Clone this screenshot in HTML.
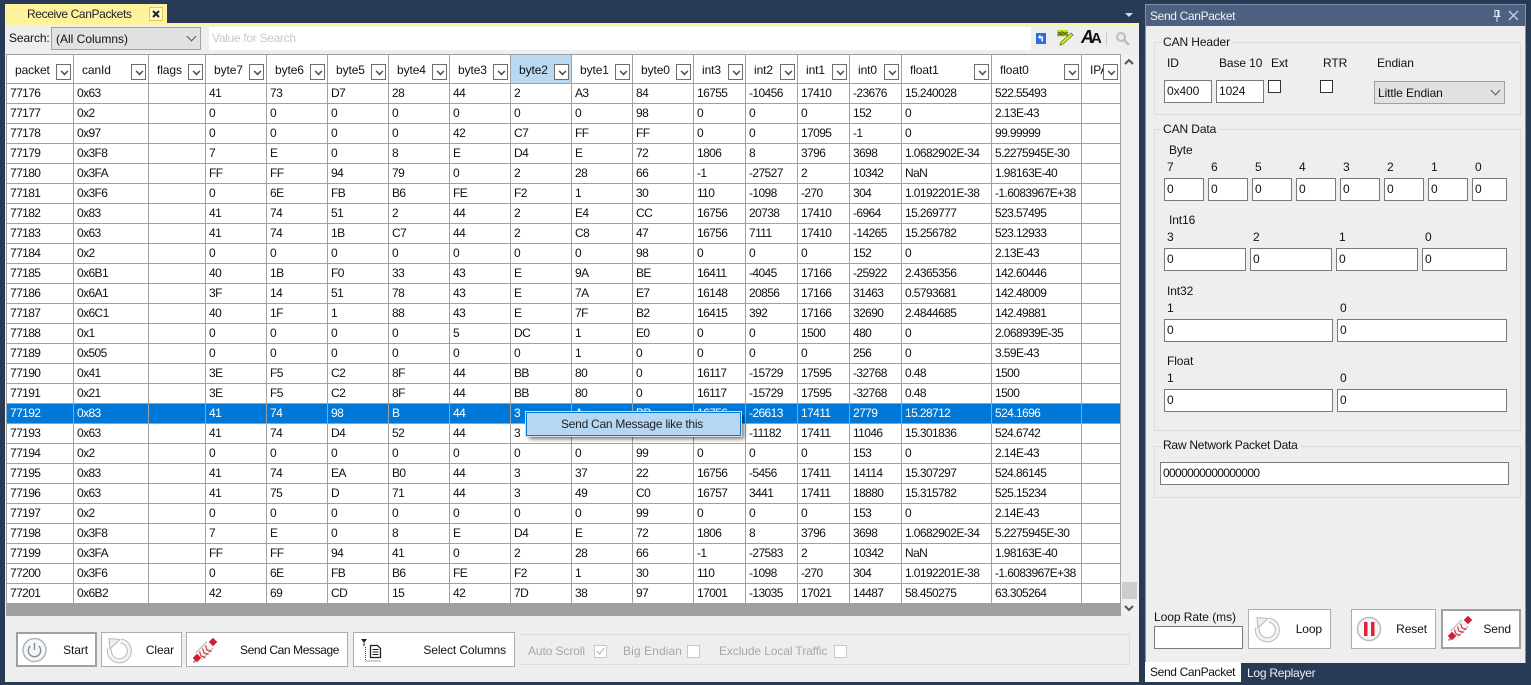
<!DOCTYPE html>
<html><head><meta charset="utf-8"><style>
*{box-sizing:border-box}
html,body{margin:0;padding:0}
body{width:1531px;height:685px;position:relative;overflow:hidden;background:#293a56;font:12px/16px "Liberation Sans",sans-serif;color:#111;letter-spacing:-.1px}
.a{position:absolute;white-space:nowrap}
.l{position:absolute;white-space:nowrap;line-height:16px;margin-top:-8px}
.i{position:absolute;background:#fff;border:1px solid #7a7a7a;height:23px;line-height:20px;padding-left:2px;white-space:nowrap}
.c{position:absolute;background:#fff;border:1px solid #333;width:13px;height:13px}
.g{position:absolute;border:1px solid #dcdcdc}
.leg{position:absolute;background:#eee;padding:0 2px 0 2px;line-height:14px;margin-top:-7px;white-space:nowrap}
.b{position:absolute;background:#fff;border:1px solid #adadad;height:35px}
.b2{border:2px solid #a0a0a0}
.t{position:absolute;white-space:nowrap;line-height:16px;top:50%;margin-top:-8px}
table{position:absolute;left:7px;top:55px;border-collapse:separate;border-spacing:0;table-layout:fixed;width:1114px;letter-spacing:-.6px;color:#111}
td,th{border-right:1px solid #a0a0a0;border-bottom:1px solid #a0a0a0;padding:0 0 0 3px;height:20px;line-height:19px;overflow:hidden;white-space:nowrap;text-align:left;font-weight:normal}
th{height:29px;padding:2px 0 0 8px;position:relative;letter-spacing:-.1px;overflow:visible;line-height:26px;vertical-align:top}
th i{position:absolute;right:2px;top:9px;width:15px;height:16px;background:#fff;border:1px solid #6d6d6d;z-index:2}
th i:after{content:"";position:absolute;left:4px;top:3px;width:5px;height:5px;border-right:2px solid #555;border-bottom:2px solid #555;transform:rotate(45deg) scale(.8)}
th.h{background:#b9d9f2}
tr.s td{background:#0078d7;color:#fff}
.dis{color:#a6a6a6}
.chev{position:absolute;width:7px;height:7px;border-right:1px solid #555;border-bottom:1px solid #555;transform:rotate(45deg)}
</style></head><body>

<!-- left doc -->
<div class="a" style="left:5px;top:4px;width:162px;height:20px;background:#fff29d"></div>
<div class="a" style="left:27px;top:6px;line-height:16px;color:#222;letter-spacing:-.38px">Receive CanPackets</div>
<div class="a" style="left:149px;top:7px;width:14px;height:14px;background:#fff8c8;border:1px solid #e5c365"></div>
<svg class="a" style="left:149px;top:7px" width="14" height="14"><path d="M4 4l6 6M10 4l-6 6" stroke="#222" stroke-width="2"/></svg>
<svg class="a" style="left:1124px;top:12px" width="10" height="6"><path d="M1 1h8L5 5z" fill="#d5dbe6"/></svg>
<div class="a" style="left:5px;top:23px;width:1134px;height:2px;background:#fff29d"></div>
<div class="a" style="left:5px;top:25px;width:1134px;height:657px;background:#eee"></div>

<!-- search -->
<div class="l" style="left:9px;top:38px">Search:</div>
<div class="a" style="left:51px;top:27px;width:150px;height:23px;background:#e1e1e1;border:1px solid #a0a0a0;padding-left:4px;line-height:23px;letter-spacing:0">(All Columns)</div>
<div class="chev" style="left:188px;top:33px"></div>
<div class="a" style="left:209px;top:27px;width:822px;height:23px;background:#fff;color:#c8c8c8;padding-left:3px;line-height:23px;letter-spacing:-.3px">Value for Search</div>
<svg class="a" style="left:1036px;top:33px" width="10" height="11"><rect width="10" height="11" fill="#2d6fd8"/><path d="M2 4l2.500-2.500V3.500h2.500V8.500h-1.500V5H4.500v1.500z" fill="#fff"/></svg>
<svg class="a" style="left:1056px;top:29px" width="19" height="17"><rect x="1" y="1" width="11" height="6.500" fill="#c4e000"/><text x="1.500" y="6.500" font-family="Liberation Sans" font-size="6.500" font-weight="bold" fill="#333">abc</text><path d="M17 6L7 15l-3 1 1-3 10-9z" fill="#d8e840" stroke="#5a7a10" stroke-width=".8"/></svg>
<div class="a" style="left:1081px;top:27px;font:italic bold 18px/21px 'Liberation Sans',sans-serif;color:#111;letter-spacing:-3px">A<span style="font:bold 15px 'Liberation Sans',sans-serif;font-style:normal">A</span></div>
<div class="a" style="left:1106px;top:32px;width:1px;height:14px;background:#ccc"></div>
<svg class="a" style="left:1115px;top:31px" width="15" height="15"><circle cx="6" cy="6" r="4" fill="none" stroke="#bcbcbc" stroke-width="2"/><path d="M9 9l5 5" stroke="#bcbcbc" stroke-width="2.500"/></svg>

<!-- grid -->
<div class="a" style="left:6px;top:54px;width:1115px;height:550px;background:#fff;border-top:1px solid #a0a0a0;border-left:1px solid #a0a0a0"></div>
<table>
<colgroup><col style="width:67px"><col style="width:75px"><col style="width:57px"><col style="width:61px"><col style="width:61px"><col style="width:61px"><col style="width:61px"><col style="width:61px"><col style="width:61px"><col style="width:61px"><col style="width:61px"><col style="width:52px"><col style="width:52px"><col style="width:52px"><col style="width:52px"><col style="width:90px"><col style="width:90px"><col style="width:39px"></colgroup>
<tr><th>packet<i></i><th>canId<i></i><th>flags<i></i><th>byte7<i></i><th>byte6<i></i><th>byte5<i></i><th>byte4<i></i><th>byte3<i></i><th class="h">byte2<i></i><th>byte1<i></i><th>byte0<i></i><th>int3<i></i><th>int2<i></i><th>int1<i></i><th>int0<i></i><th>float1<i></i><th>float0<i></i><th>IPA<i></i></tr>
<tr><td>77176<td>0x63<td><td>41<td>73<td>D7<td>28<td>44<td>2<td>A3<td>84<td>16755<td>-10456<td>17410<td>-23676<td>15.240028<td>522.55493<td></tr>
<tr><td>77177<td>0x2<td><td>0<td>0<td>0<td>0<td>0<td>0<td>0<td>98<td>0<td>0<td>0<td>152<td>0<td>2.13E-43<td></tr>
<tr><td>77178<td>0x97<td><td>0<td>0<td>0<td>0<td>42<td>C7<td>FF<td>FF<td>0<td>0<td>17095<td>-1<td>0<td>99.99999<td></tr>
<tr><td>77179<td>0x3F8<td><td>7<td>E<td>0<td>8<td>E<td>D4<td>E<td>72<td>1806<td>8<td>3796<td>3698<td>1.0682902E-34<td>5.2275945E-30<td></tr>
<tr><td>77180<td>0x3FA<td><td>FF<td>FF<td>94<td>79<td>0<td>2<td>28<td>66<td>-1<td>-27527<td>2<td>10342<td>NaN<td>1.98163E-40<td></tr>
<tr><td>77181<td>0x3F6<td><td>0<td>6E<td>FB<td>B6<td>FE<td>F2<td>1<td>30<td>110<td>-1098<td>-270<td>304<td>1.0192201E-38<td>-1.6083967E+38<td></tr>
<tr><td>77182<td>0x83<td><td>41<td>74<td>51<td>2<td>44<td>2<td>E4<td>CC<td>16756<td>20738<td>17410<td>-6964<td>15.269777<td>523.57495<td></tr>
<tr><td>77183<td>0x63<td><td>41<td>74<td>1B<td>C7<td>44<td>2<td>C8<td>47<td>16756<td>7111<td>17410<td>-14265<td>15.256782<td>523.12933<td></tr>
<tr><td>77184<td>0x2<td><td>0<td>0<td>0<td>0<td>0<td>0<td>0<td>98<td>0<td>0<td>0<td>152<td>0<td>2.13E-43<td></tr>
<tr><td>77185<td>0x6B1<td><td>40<td>1B<td>F0<td>33<td>43<td>E<td>9A<td>BE<td>16411<td>-4045<td>17166<td>-25922<td>2.4365356<td>142.60446<td></tr>
<tr><td>77186<td>0x6A1<td><td>3F<td>14<td>51<td>78<td>43<td>E<td>7A<td>E7<td>16148<td>20856<td>17166<td>31463<td>0.5793681<td>142.48009<td></tr>
<tr><td>77187<td>0x6C1<td><td>40<td>1F<td>1<td>88<td>43<td>E<td>7F<td>B2<td>16415<td>392<td>17166<td>32690<td>2.4844685<td>142.49881<td></tr>
<tr><td>77188<td>0x1<td><td>0<td>0<td>0<td>0<td>5<td>DC<td>1<td>E0<td>0<td>0<td>1500<td>480<td>0<td>2.068939E-35<td></tr>
<tr><td>77189<td>0x505<td><td>0<td>0<td>0<td>0<td>0<td>0<td>1<td>0<td>0<td>0<td>0<td>256<td>0<td>3.59E-43<td></tr>
<tr><td>77190<td>0x41<td><td>3E<td>F5<td>C2<td>8F<td>44<td>BB<td>80<td>0<td>16117<td>-15729<td>17595<td>-32768<td>0.48<td>1500<td></tr>
<tr><td>77191<td>0x21<td><td>3E<td>F5<td>C2<td>8F<td>44<td>BB<td>80<td>0<td>16117<td>-15729<td>17595<td>-32768<td>0.48<td>1500<td></tr>
<tr class="s"><td>77192<td>0x83<td><td>41<td>74<td>98<td>B<td>44<td>3<td>A<td>BB<td>16756<td>-26613<td>17411<td>2779<td>15.28712<td>524.1696<td></tr>
<tr><td>77193<td>0x63<td><td>41<td>74<td>D4<td>52<td>44<td>3<td>22<td>2B<td>16756<td>-11182<td>17411<td>11046<td>15.301836<td>524.6742<td></tr>
<tr><td>77194<td>0x2<td><td>0<td>0<td>0<td>0<td>0<td>0<td>0<td>99<td>0<td>0<td>0<td>153<td>0<td>2.14E-43<td></tr>
<tr><td>77195<td>0x83<td><td>41<td>74<td>EA<td>B0<td>44<td>3<td>37<td>22<td>16756<td>-5456<td>17411<td>14114<td>15.307297<td>524.86145<td></tr>
<tr><td>77196<td>0x63<td><td>41<td>75<td>D<td>71<td>44<td>3<td>49<td>C0<td>16757<td>3441<td>17411<td>18880<td>15.315782<td>525.15234<td></tr>
<tr><td>77197<td>0x2<td><td>0<td>0<td>0<td>0<td>0<td>0<td>0<td>99<td>0<td>0<td>0<td>153<td>0<td>2.14E-43<td></tr>
<tr><td>77198<td>0x3F8<td><td>7<td>E<td>0<td>8<td>E<td>D4<td>E<td>72<td>1806<td>8<td>3796<td>3698<td>1.0682902E-34<td>5.2275945E-30<td></tr>
<tr><td>77199<td>0x3FA<td><td>FF<td>FF<td>94<td>41<td>0<td>2<td>28<td>66<td>-1<td>-27583<td>2<td>10342<td>NaN<td>1.98163E-40<td></tr>
<tr><td>77200<td>0x3F6<td><td>0<td>6E<td>FB<td>B6<td>FE<td>F2<td>1<td>30<td>110<td>-1098<td>-270<td>304<td>1.0192201E-38<td>-1.6083967E+38<td></tr>
<tr><td>77201<td>0x6B2<td><td>42<td>69<td>CD<td>15<td>42<td>7D<td>38<td>97<td>17001<td>-13035<td>17021<td>14487<td>58.450275<td>63.305264<td></tr>
</table>
<div class="a" style="left:6px;top:604px;width:1115px;height:12px;background:#a0a0a0"></div>

<!-- scrollbar -->
<div class="a" style="left:1121px;top:54px;width:18px;height:562px;background:#f0f0f0"></div>
<svg class="a" style="left:1123px;top:58px" width="12" height="8"><path d="M2 6l4-4 4 4" fill="none" stroke="#555" stroke-width="2"/></svg>
<div class="a" style="left:1122px;top:582px;width:15px;height:17px;background:#cdcdcd"></div>
<svg class="a" style="left:1123px;top:604px" width="12" height="8"><path d="M2 2l4 4 4-4" fill="none" stroke="#555" stroke-width="2"/></svg>

<!-- popup -->
<div class="a" style="left:526px;top:412px;width:215px;height:24px;background:#b5d7f3;border:1px solid #0078d7;outline:1px solid #ddd;box-shadow:3px 3px 4px rgba(0,0,0,.55);text-align:center;line-height:22px;color:#222;letter-spacing:-.26px;padding-right:3px">Send Can Message like this</div>

<!-- bottom buttons -->
<div class="b b2" style="left:16px;top:632px;width:81px"><span class="t" style="right:7px">Start</span></div>
<svg class="a" style="left:21px;top:637px" width="28" height="26"><circle cx="13.500" cy="13" r="11.500" fill="#f4f6f7" stroke="#aeb6bc" stroke-width="1.500"/><path d="M9.200 9a6.200 6.200 0 1 0 8.600 0" fill="none" stroke="#7f8f9c" stroke-width="1.400"/><path d="M13.500 6v7" stroke="#7f8f9c" stroke-width="1.400"/></svg>
<div class="b" style="left:101px;top:632px;width:81px"><span class="t" style="right:7px">Clear</span></div>
<svg class="a" style="left:105px;top:636px" width="28" height="28"><path d="M16 5A10 10 0 1 1 4.500 13" fill="none" stroke="#b6babd" stroke-width="5"/><path d="M16 5A10 10 0 1 1 4.500 13" fill="none" stroke="#f3f4f4" stroke-width="3"/><path d="M4 2.500L15 3.500 5 13z" fill="#eceeef" stroke="#b6babd"/></svg>
<div class="b" style="left:186px;top:632px;width:162px"><span class="t" style="right:8px;letter-spacing:-.4px">Send Can Message</span></div>
<svg class="a" style="left:192px;top:638px" width="26" height="26"><path d="M1.500 24.500l4-4" stroke="#999" stroke-width="2"/><path d="M7 18L18 7" stroke="#aaa" stroke-width="10"/><path d="M7 18L18 7" stroke="#f5f5f5" stroke-width="8"/><path d="M7.500 13.500l1.500 4.500 4.500 1.500M10.500 10.500l1.500 4.500 4.500 1.500M13.500 7.500l1.500 4.500 4.500 1.500" fill="none" stroke="#dc3545" stroke-width="1.200"/><rect x="18" y="1" width="6" height="6" transform="rotate(45 21 4)" fill="#d0202f"/><rect x="2" y="17" width="6" height="6" transform="rotate(45 5 20)" fill="#d0202f"/></svg>
<div class="b" style="left:353px;top:632px;width:162px"><span class="t" style="right:8px">Select Columns</span></div>
<svg class="a" style="left:360px;top:638px" width="24" height="26"><path d="M1 1h6L4 5z" fill="#222"/><path d="M4 5v3" stroke="#222"/><path d="M10.500 7.500h7l3 3v9h-10z" fill="#fff" stroke="#222" stroke-width="1.300"/><path d="M12.500 11.500h6M12.500 14h6M12.500 16.500h6" stroke="#222"/><path d="M5.500 9v14M5.500 23h15" stroke="#444" stroke-dasharray="1 1"/></svg>

<div class="g" style="left:520px;top:634px;width:610px;height:31px;border-left:0"></div>
<div class="l dis" style="left:528px;top:651px">Auto Scroll</div>
<div class="c" style="left:594px;top:645px;border-color:#c8c8c8"></div>
<svg class="a" style="left:594px;top:645px" width="13" height="13"><path d="M3 6l2.500 3L10 3" fill="none" stroke="#bbb" stroke-width="1.200"/></svg>
<div class="l dis" style="left:623px;top:651px;letter-spacing:.1px">Big Endian</div>
<div class="c" style="left:687px;top:645px;border-color:#c8c8c8"></div>
<div class="l dis" style="left:719px;top:651px;letter-spacing:-.1px">Exclude Local Traffic</div>
<div class="c" style="left:834px;top:645px;border-color:#c8c8c8"></div>

<!-- right panel -->
<div class="a" style="left:1145px;top:4px;width:381px;height:659px;background:#eee;border:1px solid #7f90ad;border-bottom:0"></div>
<div class="a" style="left:1146px;top:5px;width:379px;height:21px;background:#4d6082"></div>
<div class="a" style="left:1150px;top:8px;color:#f2f2f2;line-height:16px;letter-spacing:-.35px">Send CanPacket</div>
<svg class="a" style="left:1491px;top:9px" width="12" height="14"><path d="M4 1.500h4v6H4zM2.500 7.500h7M6 7.500V13M7 2v5" fill="none" stroke="#e6e9ef"/></svg>
<svg class="a" style="left:1508px;top:10px" width="11" height="11"><path d="M1 1l9 9M10 1l-9 9" stroke="#c5ccd9" stroke-width="1.500"/></svg>

<div class="g" style="left:1154px;top:42px;width:367px;height:73px"></div>
<div class="leg" style="left:1161px;top:42px">CAN Header</div>
<div class="l" style="left:1167px;top:63px">ID</div>
<div class="l" style="left:1219px;top:63px">Base 10</div>
<div class="l" style="left:1271px;top:63px">Ext</div>
<div class="l" style="left:1323px;top:63px">RTR</div>
<div class="l" style="left:1377px;top:63px">Endian</div>
<div class="i" style="left:1164px;top:80px;width:48px">0x400</div>
<div class="i" style="left:1216px;top:80px;width:48px">1024</div>
<div class="c" style="left:1268px;top:80px"></div>
<div class="c" style="left:1320px;top:80px"></div>
<div class="a" style="left:1374px;top:81px;width:131px;height:23px;background:#e1e1e1;border:1px solid #a0a0a0;padding-left:3px;line-height:23px">Little Endian</div>
<div class="chev" style="left:1492px;top:87px"></div>

<div class="g" style="left:1154px;top:129px;width:367px;height:302px"></div>
<div class="leg" style="left:1161px;top:129px">CAN Data</div>
<div class="l" style="left:1169px;top:150px">Byte</div>
<div class="l" style="left:1167px;top:167px">7</div><div class="l" style="left:1211px;top:167px">6</div><div class="l" style="left:1255px;top:167px">5</div><div class="l" style="left:1299px;top:167px">4</div><div class="l" style="left:1343px;top:167px">3</div><div class="l" style="left:1387px;top:167px">2</div><div class="l" style="left:1431px;top:167px">1</div><div class="l" style="left:1475px;top:167px">0</div>
<div class="i" style="left:1164px;top:178px;width:40px">0</div><div class="i" style="left:1208px;top:178px;width:40px">0</div><div class="i" style="left:1252px;top:178px;width:40px">0</div><div class="i" style="left:1296px;top:178px;width:40px">0</div><div class="i" style="left:1340px;top:178px;width:40px">0</div><div class="i" style="left:1384px;top:178px;width:40px">0</div><div class="i" style="left:1428px;top:178px;width:40px">0</div><div class="i" style="left:1472px;top:178px;width:35px">0</div>
<div class="l" style="left:1169px;top:220px">Int16</div>
<div class="l" style="left:1167px;top:237px">3</div><div class="l" style="left:1253px;top:237px">2</div><div class="l" style="left:1339px;top:237px">1</div><div class="l" style="left:1425px;top:237px">0</div>
<div class="i" style="left:1164px;top:248px;width:82px">0</div><div class="i" style="left:1250px;top:248px;width:82px">0</div><div class="i" style="left:1336px;top:248px;width:82px">0</div><div class="i" style="left:1422px;top:248px;width:85px">0</div>
<div class="l" style="left:1167px;top:291px">Int32</div>
<div class="l" style="left:1167px;top:308px">1</div><div class="l" style="left:1340px;top:308px">0</div>
<div class="i" style="left:1164px;top:319px;width:169px">0</div><div class="i" style="left:1337px;top:319px;width:170px">0</div>
<div class="l" style="left:1167px;top:361px">Float</div>
<div class="l" style="left:1167px;top:378px">1</div><div class="l" style="left:1340px;top:378px">0</div>
<div class="i" style="left:1164px;top:389px;width:169px">0</div><div class="i" style="left:1337px;top:389px;width:170px">0</div>

<div class="g" style="left:1154px;top:446px;width:367px;height:52px"></div>
<div class="leg" style="left:1161px;top:445px;letter-spacing:-.24px">Raw Network Packet Data</div>
<div class="i" style="left:1160px;top:462px;width:349px;letter-spacing:-.65px">0000000000000000</div>

<div class="l" style="left:1154px;top:617px;letter-spacing:-.05px">Loop Rate (ms)</div>
<div class="i" style="left:1154px;top:626px;width:89px"></div>
<div class="b" style="left:1248px;top:609px;width:83px;height:40px"><span class="t" style="right:8px">Loop</span></div>
<svg class="a" style="left:1253px;top:615px" width="28" height="28"><path d="M16 5A10 10 0 1 1 4.500 13" fill="none" stroke="#b6babd" stroke-width="5"/><path d="M16 5A10 10 0 1 1 4.500 13" fill="none" stroke="#f3f4f4" stroke-width="3"/><path d="M4 2.500L15 3.500 5 13z" fill="#eceeef" stroke="#b6babd"/></svg>
<div class="b" style="left:1351px;top:609px;width:85px;height:40px"><span class="t" style="right:8px">Reset</span></div>
<svg class="a" style="left:1356px;top:616px" width="26" height="26"><circle cx="13" cy="13" r="11.500" fill="#f4f6f7" stroke="#b4bcc2" stroke-width="1.500"/><rect x="8" y="6" width="3.500" height="14" fill="#e02035"/><rect x="15" y="6" width="3.500" height="14" fill="#e02035"/></svg>
<div class="b b2" style="left:1441px;top:609px;width:80px;height:40px"><span class="t" style="right:8px">Send</span></div>
<svg class="a" style="left:1447px;top:616px" width="26" height="26"><path d="M1.500 24.500l4-4" stroke="#999" stroke-width="2"/><path d="M7 18L18 7" stroke="#aaa" stroke-width="10"/><path d="M7 18L18 7" stroke="#f5f5f5" stroke-width="8"/><path d="M7.500 13.500l1.500 4.500 4.500 1.500M10.500 10.500l1.500 4.500 4.500 1.500M13.500 7.500l1.500 4.500 4.500 1.500" fill="none" stroke="#dc3545" stroke-width="1.200"/><rect x="18" y="1" width="6" height="6" transform="rotate(45 21 4)" fill="#d0202f"/><rect x="2" y="17" width="6" height="6" transform="rotate(45 5 20)" fill="#d0202f"/></svg>

<div class="a" style="left:1145px;top:662px;width:96px;height:20px;background:#fff;padding-left:5px;line-height:21px;color:#111;letter-spacing:-.35px">Send CanPacket</div>
<div class="a" style="left:1247px;top:665px;line-height:16px;color:#eef0f4;letter-spacing:-.25px">Log Replayer</div>
</body></html>
